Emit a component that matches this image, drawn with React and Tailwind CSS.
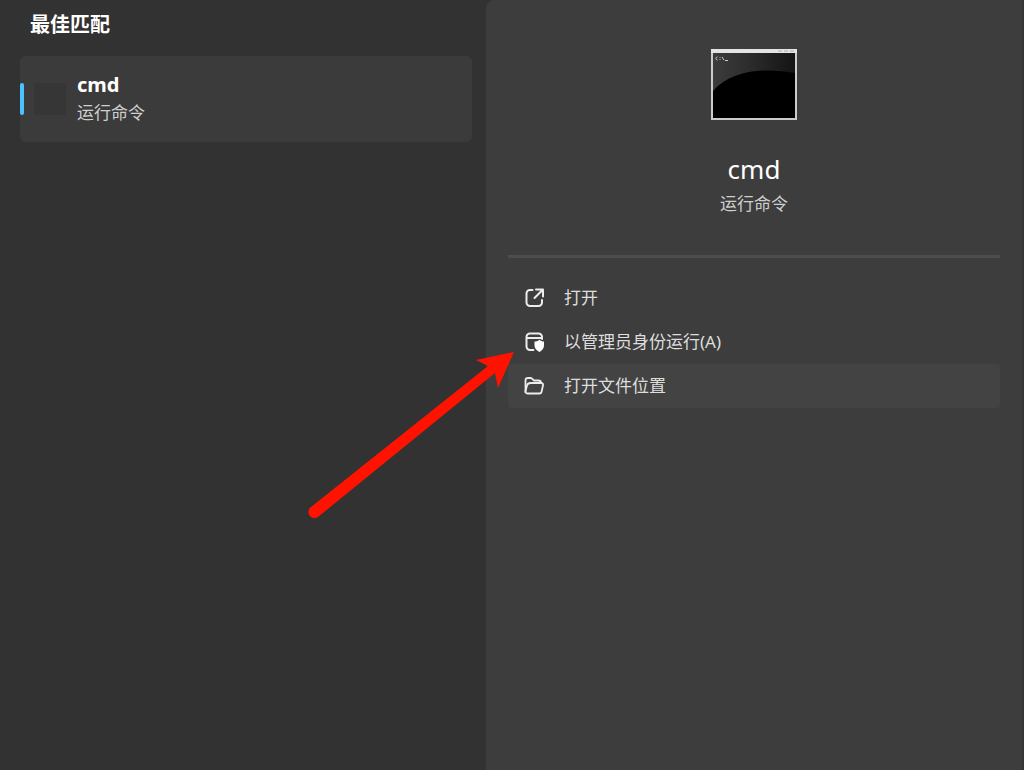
const ACTIONS = [
  { id: 'open', label: '打开', Icon: OpenIcon },
  { id: 'admin', label: '以管理员身份运行(A)', Icon: AdminIcon },
  { id: 'location', label: '打开文件位置', Icon: FolderIcon, active: true },
]

function OpenIcon() {
  return (
    <svg width="20" height="20" viewBox="0 0 20 20" fill="none" stroke="#ececec" strokeWidth="2" strokeLinecap="round" strokeLinejoin="round" aria-hidden="true">
      <path d="M8.500 2H6a3.500 3.500 0 0 0-3.500 3.500v9A3.500 3.500 0 0 0 6 18h8.500a3.500 3.500 0 0 0 3.500-3.500V12" />
      <path d="M12 1.500h7v7M18.500 2l-8 8" />
    </svg>
  )
}

function AdminIcon() {
  return (
    <svg width="20" height="20" viewBox="0 0 20 20" fill="none" stroke="#ececec" strokeWidth="2" strokeLinecap="round" strokeLinejoin="round" aria-hidden="true">
      <path d="M9.500 18H6a3.500 3.500 0 0 1-3.500-3.500V5A3.500 3.500 0 0 1 6 1.500h8.500A3.500 3.500 0 0 1 18 5v2M2.500 6H18" />
      <path d="M15.500 7.800c1.200 1.200 2.600 1.700 4.500 1.800v4c0 3-1.900 5.200-4.500 6.300-3-1.100-5-3.300-5-6.300v-4c2.200-.1 3.800-.6 5-1.800z" fill="#fff" stroke="none" />
    </svg>
  )
}

function FolderIcon() {
  return (
    <svg width="20" height="20" viewBox="0 0 20 20" fill="none" stroke="#ececec" strokeWidth="1.8" strokeLinecap="round" strokeLinejoin="round" aria-hidden="true">
      <path d="M1.500 15.500V4.500A2.500 2.500 0 0 1 4 2h2.500c.6 0 1.100.2 1.500.6L10 4.500h4.500A2.500 2.500 0 0 1 17 7" />
      <path d="M6.500 7H17c1.500 0 2.300 1 2 2.300l-1.400 6.400A2.300 2.300 0 0 1 15.300 17.500H3.500c-1.600 0-2.300-1.100-2-2.500l1.600-5.800C3.500 7.800 4.700 7 6.500 7z" />
    </svg>
  )
}

function ConsoleIcon() {
  return (
    <svg width="88" height="72" viewBox="0 0 88 72" aria-hidden="true">
      <defs>
        <linearGradient id="gloss" x1="0" y1="0" x2="1" y2="0">
          <stop offset="0" stopColor="#3c3c3c" />
          <stop offset="0.35" stopColor="#303030" />
          <stop offset="1" stopColor="#141414" />
        </linearGradient>
      </defs>
      <rect x="1" y="0" width="86" height="71" fill="#c9ccd0" />
      <rect x="1" y="0" width="86" height="4" fill="#e4e4e6" />
      <path d="M68 2h16" stroke="#aaa" strokeDasharray="4 2" />
      <rect x="3" y="4" width="82" height="65" fill="#000" />
      <path d="M3 4h82v20C52 18 20 22 3 42z" fill="url(#gloss)" />
      <path d="M7.500 8a1.500 1.500 0 1 0 0 3M10 8v.8M10 10.200v.8M12 8l2 3M15 11.500h3" fill="none" stroke="#ccc" strokeWidth="1" />
    </svg>
  )
}

export default function App() {
  return (
    <div className="relative grid grid-cols-[486fr_538fr] min-h-screen overflow-hidden bg-[#323232] font-['Noto_Sans','Noto_Sans_CJK_SC',sans-serif] text-white">
      {/* Results */}
      <section className="pl-5 pr-[14px] pt-[9px]">
        <h2 className="pl-[10px] text-[20px] leading-8 font-bold">最佳匹配</h2>
        <button className="relative mt-[15px] flex h-[86px] w-full items-center rounded-md bg-[#3b3b3b] text-left">
          <span className="h-8 w-1 rounded-full bg-[#4cc2ff]" />
          <span className="ml-[10px] size-8 bg-[#363636]" />
          <span className="ml-[11px] flex flex-col">
            <span className="text-[20px] leading-7 font-bold">cmd</span>
            <span className="text-[17px] leading-7 text-[#cfcfcf]">运行命令</span>
          </span>
        </button>
      </section>

      {/* Details */}
      <section className="rounded-tl-lg border-r-2 border-[#353535] bg-[#3d3d3d] px-[22px] pt-[49px]">
        <div className="flex flex-col items-center">
          <ConsoleIcon />
          <h1 className="mt-[30px] text-[26px] leading-9">cmd</h1>
          <p className="mt-px text-[17px] leading-8 text-[#cfcfcf]">运行命令</p>
        </div>
        <hr className="mt-[35px] border-t-3 border-[#4d4d4d]" />
        <ul className="mt-[18px]">
          {ACTIONS.map(({ id, label, Icon, active }) => (
            <li key={id}>
              <button
                className={`flex h-11 w-full items-center gap-5 rounded px-4 text-left text-[17px] text-[#dedede] hover:bg-[#434343] ${active ? 'bg-[#434343]' : ''}`}
              >
                <Icon />
                {label}
              </button>
            </li>
          ))}
        </ul>
      </section>

      {/* Pointer arrow */}
      <svg className="pointer-events-none absolute left-[300px] top-[340px]" width="220" height="184" viewBox="0 0 220 184" aria-hidden="true">
        <path d="M214 12L176 20L188 26L11 167A5.500 5.500 0 0 0 18 177L195 33L198 48z" fill="#ff1300" />
      </svg>
    </div>
  )
}
